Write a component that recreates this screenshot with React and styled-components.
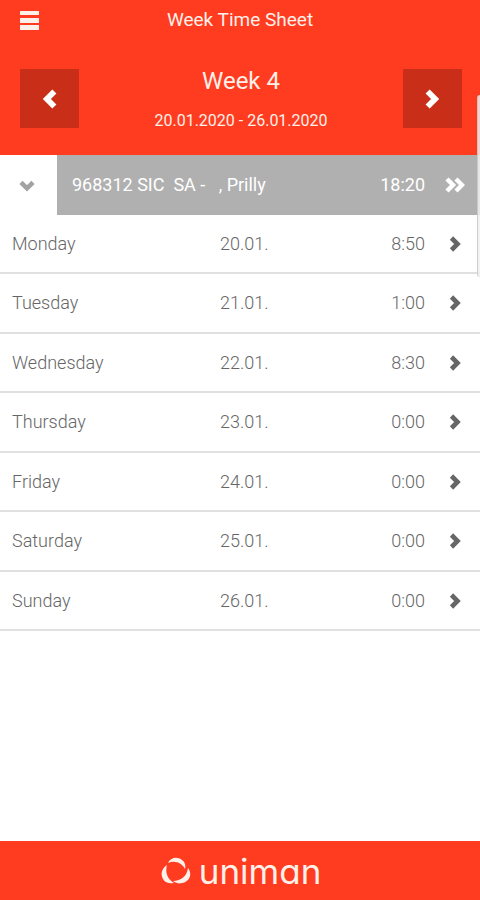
import React from 'react';
import styled, { createGlobalStyle } from 'styled-components';

const GlobalStyle = createGlobalStyle`
  *, *::before, *::after { box-sizing: border-box; }
  body { margin: 0; background: #fff; font-family: Roboto, "Liberation Sans", sans-serif; }
  button { font: inherit; color: inherit; border: 0; padding: 0; background: none; cursor: pointer; }
  svg { display: block; }
`;

const Page = styled.div`
  position: relative;
  min-height: 100vh;
  display: flex;
  flex-direction: column;
`;

const Header = styled.header`
  background: #ff3c1f;
  color: #fff0ea;
`;

const TitleBar = styled.div`
  display: grid;
  grid-template-columns: 20px 1fr 20px;
  align-items: center;
  height: 40px;
  padding: 0 20px;
`;

const MenuButton = styled.button`
  width: 20px;
  height: 20px;
`;

const Title = styled.h1`
  margin: 0;
  font-size: 19px;
  line-height: 20px;
  font-weight: 400;
  text-align: center;
`;

const WeekBar = styled.div`
  display: flex;
  justify-content: space-between;
  align-items: flex-start;
  height: 115px;
  padding: 29px 18px 0 20px;
`;

const WeekInfo = styled.div`
  text-align: center;
`;

const WeekName = styled.h2`
  margin: 0;
  font-size: 24px;
  line-height: 24px;
  font-weight: 400;
`;

const WeekRange = styled.p`
  margin: 18px 0 0;
  font-size: 16px;
  line-height: 20px;
`;

const StepButton = styled.button`
  display: grid;
  place-items: center;
  width: 59px;
  height: 59px;
  && { background: #c92f18; color: #fff; }
`;

const Sheet = styled.main`
  flex: 1;
`;

const Rows = styled.div`
  display: grid;
  grid-auto-rows: 1fr;
  min-height: 476px;
`;

const GroupRow = styled.div`
  display: grid;
  grid-template-columns: 57px 1fr;
`;

const ToggleButton = styled.button`
  display: grid;
  align-items: center;
  && { padding-left: 19px; color: #a3a3a3; }
`;

const GroupBody = styled.div`
  display: grid;
  grid-template-columns: 1fr auto 55px;
  align-items: center;
  padding-left: 15px;
  background: #b0b0b0;
  color: #fff;
  font-size: 18px;
`;

const GroupName = styled.span`
  white-space: pre;
`;

const DayRow = styled.div`
  display: grid;
  grid-template-columns: 208px 1fr auto 55px;
  align-items: center;
  padding-left: 12px;
  border-bottom: 2px solid #e0e0e0;
  color: #666;
  font-size: 18px;
  font-weight: 300;
`;

const OpenButton = styled.button`
  display: grid;
  justify-content: center;
  && { padding: 1px 0 0 5px; color: ${(p) => (p.$light ? '#fff' : '#666')}; }
`;

const Footer = styled.footer`
  display: flex;
  align-items: center;
  justify-content: center;
  gap: 8px;
  height: 59px;
  padding-left: 2px;
  background: #ff3c1f;
  color: #fff0ea;
`;

const Brand = styled.span`
  font-family: Inter, Lato, sans-serif;
  font-feature-settings: "cv11" 1;
  font-size: 35px;
  line-height: 40px;
  font-weight: 400;
`;

const EdgeHandle = styled.div`
  position: absolute;
  top: 95px;
  right: 0;
  width: 3px;
  height: 182px;
  border-left: 1px solid rgba(190, 190, 190, 0.7);
  border-radius: 3px 0 0 3px;
  background: rgba(240, 240, 240, 0.85);
`;

const paths = {
  right: 'M4.5 2 10.5 8l-6 6',
  down: 'M2 5.3 8 11.3l6-6',
  left: 'M11.5 2 5.5 8l6 6',
};

function Chevron({ to = 'right', size = 16 }) {
  return (
    <svg width={size} height={size} viewBox="0 0 16 16" aria-hidden="true">
      <path d={paths[to]} fill="none" stroke="currentColor" strokeWidth="4.6" />
    </svg>
  );
}

function DoubleChevron() {
  return (
    <svg width="20" height="16" viewBox="0 0 20 16" aria-hidden="true">
      <path d="M2 2 8 8l-6 6M11 2l6 6-6 6" fill="none" stroke="currentColor" strokeWidth="4.4" />
    </svg>
  );
}

function MenuIcon() {
  return (
    <svg width="20" height="20" viewBox="0 0 20 20" aria-hidden="true">
      <path d="M0 1h19v4H0zM0 8h19v5H0zM0 15h19v5H0z" fill="currentColor" />
    </svg>
  );
}

function BrandMark() {
  return (
    <svg width="30" height="28" viewBox="0 0 30 28" fill="currentColor" aria-hidden="true">
      <path d="M7 6C9 1 16-1 21 3c3 2 4 6 3 9C21 6 14 3 7 6Z" />
      <path d="M6 8C1 11-1 17 2 22c2 4 7 5 11 4C6 22 4 15 6 8Z" />
      <path d="M27 11c5 6 1 14-6 15-3 1-6 0-9-2 8 0 14-5 15-13Z" />
    </svg>
  );
}

const days = [
  ['Monday', '20.01.', '8:50'],
  ['Tuesday', '21.01.', '1:00'],
  ['Wednesday', '22.01.', '8:30'],
  ['Thursday', '23.01.', '0:00'],
  ['Friday', '24.01.', '0:00'],
  ['Saturday', '25.01.', '0:00'],
  ['Sunday', '26.01.', '0:00'],
];

export default function App() {
  return (
    <>
      <GlobalStyle />
      <Page>
        <Header>
          <TitleBar>
            <MenuButton aria-label="Menu"><MenuIcon /></MenuButton>
            <Title>Week Time Sheet</Title>
          </TitleBar>
          <WeekBar>
            <StepButton aria-label="Previous week"><Chevron to="left" size={20} /></StepButton>
            <WeekInfo>
              <WeekName>Week 4</WeekName>
              <WeekRange>20.01.2020 - 26.01.2020</WeekRange>
            </WeekInfo>
            <StepButton aria-label="Next week"><Chevron size={20} /></StepButton>
          </WeekBar>
        </Header>
        <Sheet>
          <Rows>
            <GroupRow>
              <ToggleButton aria-label="Collapse project"><Chevron to="down" /></ToggleButton>
              <GroupBody>
                <GroupName>{'968312 SIC  SA -   , Prilly'}</GroupName>
                <span>18:20</span>
                <OpenButton $light aria-label="Open project"><DoubleChevron /></OpenButton>
              </GroupBody>
            </GroupRow>
            {days.map(([name, date, hours]) => (
              <DayRow key={name}>
                <span>{name}</span>
                <span>{date}</span>
                <span>{hours}</span>
                <OpenButton aria-label={`Open ${name}`}><Chevron /></OpenButton>
              </DayRow>
            ))}
          </Rows>
        </Sheet>
        <Footer>
          <BrandMark />
          <Brand>uniman</Brand>
        </Footer>
        <EdgeHandle />
      </Page>
    </>
  );
}
